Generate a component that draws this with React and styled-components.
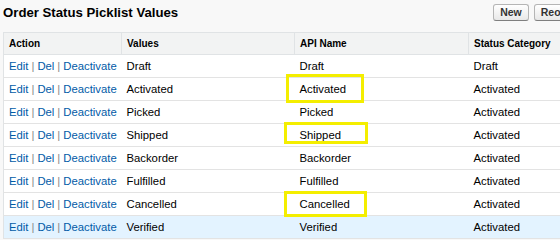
import React from "react";
import styled, { createGlobalStyle } from "styled-components";

const GlobalStyle = createGlobalStyle`
  html, body {
    margin: 0;
    padding: 0;
    background: #f8f8f8;
    overflow: hidden;
  }
  body {
    font-family: "Liberation Sans", Arial, sans-serif;
  }
`;

const Page = styled.div`
  width: 600px;
  padding: 0 0 0 3px;
`;

const TitleBar = styled.div`
  display: flex;
  align-items: center;
  width: 585px;
  height: 24px;
  margin-bottom: 8px;
`;

const Title = styled.h2`
  margin: 0;
  font-size: 13.2px;
  font-weight: bold;
  color: #000;
  flex: 1;
`;

const Buttons = styled.div`
  display: flex;
  gap: 5px;
`;

const Button = styled.button`
  font-family: "Liberation Sans", Arial, sans-serif;
  font-size: 10.5px;
  font-weight: bold;
  color: #333;
  height: 17px;
  padding: 0 6px;
  border: 1px solid #b5b5b5;
  border-bottom-color: #7f7f7f;
  border-radius: 3px;
  background: linear-gradient(#ffffff, #e8e8e8);
`;

const Table = styled.table`
  border-collapse: collapse;
  width: 597px;
  background: #fff;
  border-left: 1px solid #e0e3e5;
  table-layout: fixed;
`;

const Col = styled.col`
  width: ${(p) => p.$w}px;
`;

const HeadCell = styled.th`
  height: 21px;
  padding: 0 5px;
  text-align: left;
  font-size: 10px;
  font-weight: bold;
  color: #000;
  white-space: nowrap;
  background: #f2f3f3;
  border-top: 1px solid #e0e3e5;
  border-bottom: 1px solid #e0e3e5;
  border-left: 1px solid #e0e3e5;
  &:first-child {
    border-left: none;
  }
`;

const Row = styled.tr`
  background: ${(p) => (p.$active ? "#e3f3ff" : "#fff")};
`;

const Cell = styled.td`
  position: relative;
  height: 22px;
  padding: 0 5px;
  font-size: 11.3px;
  color: #000;
  border-bottom: 1px solid #e3e3e3;
  white-space: nowrap;
`;

const Link = styled.a`
  color: #015ba7;
  text-decoration: none;
`;

const Sep = styled.span`
  color: #888;
  margin: 0 3px;
`;

const Highlight = styled.span`
  position: absolute;
  box-sizing: border-box;
  border: 3px solid #f4ee00;
  pointer-events: none;
`;

const rows = [
  { value: "Draft", status: "Draft" },
  { value: "Activated", status: "Activated", box: { l: -9, t: -4, w: 78, h: 29 } },
  { value: "Picked", status: "Activated" },
  { value: "Shipped", status: "Activated", box: { l: -11, t: -2, w: 84, h: 22 } },
  { value: "Backorder", status: "Activated" },
  { value: "Fulfilled", status: "Activated" },
  { value: "Cancelled", status: "Activated", box: { l: -11, t: -2, w: 83, h: 26 } },
  { value: "Verified", status: "Activated", active: true },
];

export default function App() {
  return (
    <>
      <GlobalStyle />
      <Page>
        <TitleBar>
          <Title>Order Status Picklist Values</Title>
          <Buttons>
            <Button>New</Button>
            <Button>Reorder</Button>
          </Buttons>
        </TitleBar>
        <Table>
          <colgroup>
            <Col $w={118} />
            <Col $w={173} />
            <Col $w={174} />
            <Col $w={132} />
          </colgroup>
          <thead>
            <tr>
              <HeadCell>Action</HeadCell>
              <HeadCell>Values</HeadCell>
              <HeadCell>API Name</HeadCell>
              <HeadCell>Status Category</HeadCell>
            </tr>
          </thead>
          <tbody>
            {rows.map((r) => (
              <Row key={r.value} $active={r.active}>
                <Cell>
                  <Link href="#">Edit</Link>
                  <Sep>|</Sep>
                  <Link href="#">Del</Link>
                  <Sep>|</Sep>
                  <Link href="#">Deactivate</Link>
                </Cell>
                <Cell>{r.value}</Cell>
                <Cell>
                  {r.value}
                  {r.box && (
                    <Highlight
                      style={{
                        left: r.box.l,
                        top: r.box.t,
                        width: r.box.w,
                        height: r.box.h,
                      }}
                    />
                  )}
                </Cell>
                <Cell>{r.status}</Cell>
              </Row>
            ))}
          </tbody>
        </Table>
      </Page>
    </>
  );
}
